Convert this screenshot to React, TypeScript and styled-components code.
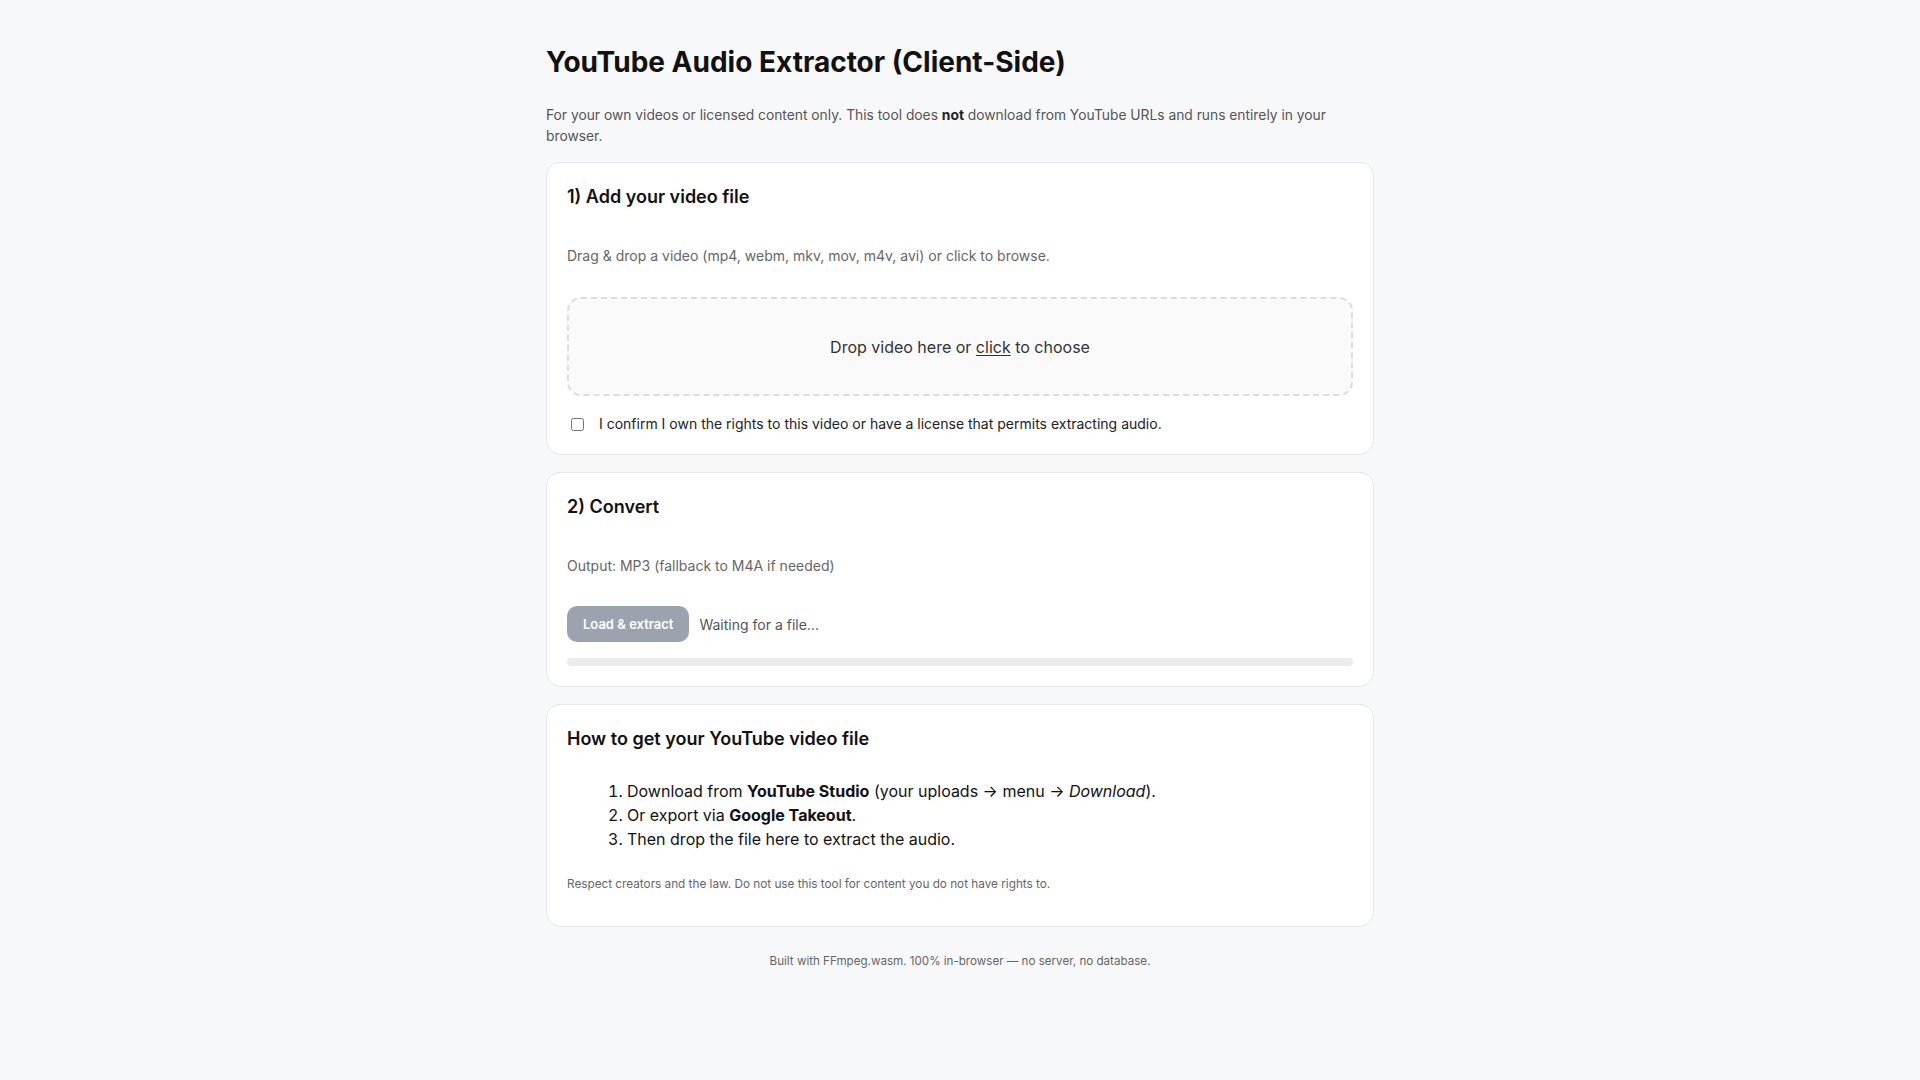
import React, { useState } from 'react'
import styled, { createGlobalStyle } from 'styled-components'

const GlobalStyle = createGlobalStyle`
  html, body {
    margin: 0;
    padding: 0;
    background: #f7f8fa;
    font-family: Inter, "Noto Sans", "Liberation Sans", sans-serif;
    color: #111;
  }
`

const Page = styled.main`
  max-width: 828px;
  margin: 0 auto;
  padding: 45px 0 40px;
`

const Title = styled.h1`
  margin: 0;
  font-size: 28px;
  line-height: 34px;
  font-weight: 700;
  color: #111;
`

const Lead = styled.p`
  margin: 26px 0 15px;
  font-size: 13.8px;
  line-height: 21px;
  color: #555;

  b {
    color: #222;
    font-weight: 700;
  }
`

const Card = styled.section`
  background: #fff;
  border: 1px solid #e5e7eb;
  border-radius: 14px;
  padding: 20px;
  margin-bottom: 17px;
`

const CardTitle = styled.h2`
  margin: 0;
  font-size: 18px;
  line-height: 28px;
  font-weight: 600;
  color: #111;
`

const Hint = styled.p`
  margin: 35px 0 0;
  font-size: 14px;
  line-height: 20px;
  color: #666;
`

const DropZone = styled.div`
  margin-top: 31px;
  border: 2px dashed #ddd;
  border-radius: 14px;
  background: #fafafa;
  padding: 36px 16px 35px;
  text-align: center;
  font-size: 16px;
  line-height: 24px;
  color: #333;
  cursor: pointer;

  u {
    text-decoration: underline;
    text-underline-offset: 2px;
  }
`

const ConfirmRow = styled.label`
  display: flex;
  align-items: center;
  gap: 15px;
  margin-top: 18px;
  padding-left: 4px;
  font-size: 14px;
  line-height: 20px;
  color: #222;

  input {
    margin: 0;
    width: 13px;
    height: 13px;
  }
`

const ActionRow = styled.div`
  display: flex;
  align-items: center;
  gap: 10px;
  margin-top: 30px;
`

const Button = styled.button<{ $disabled?: boolean }>`
  height: 36px;
  padding: 0 16px;
  border: none;
  border-radius: 10px;
  background: ${(p) => (p.$disabled ? '#9ca3af' : '#111827')};
  color: #fff;
  font-family: inherit;
  font-size: 13px;
  font-weight: 600;
  cursor: ${(p) => (p.$disabled ? 'not-allowed' : 'pointer')};
`

const Status = styled.span`
  font-size: 14px;
  color: #555;
`

const Progress = styled.div`
  margin-top: 16px;
  height: 8px;
  border-radius: 999px;
  background: #ececec;
  overflow: hidden;
`

const ProgressFill = styled.div`
  height: 100%;
  background: #111827;
`

const Steps = styled.ol`
  margin: 26px 0 0;
  padding-left: 60px;
  font-size: 16px;
  line-height: 24px;
  color: #111;

  b {
    font-weight: 700;
  }
`

const Note = styled.p`
  margin: 24px 0 13px;
  font-size: 11.75px;
  line-height: 18px;
  color: #666;
`

const Footer = styled.footer`
  margin-top: 25px;
  text-align: center;
  font-size: 11.6px;
  line-height: 18px;
  color: #666;
`

export default function App() {
  const [confirmed, setConfirmed] = useState(false)
  const [progress] = useState(0)

  return (
    <>
      <GlobalStyle />
      <Page>
        <Title>YouTube Audio Extractor (Client-Side)</Title>
        <Lead>
          For your own videos or licensed content only. This tool does <b>not</b> download from
          YouTube URLs and runs entirely in your browser.
        </Lead>

        <Card>
          <CardTitle>1) Add your video file</CardTitle>
          <Hint>Drag &amp; drop a video (mp4, webm, mkv, mov, m4v, avi) or click to browse.</Hint>
          <DropZone>
            Drop video here or <u>click</u> to choose
          </DropZone>
          <ConfirmRow>
            <input
              type="checkbox"
              checked={confirmed}
              onChange={(e) => setConfirmed(e.target.checked)}
            />
            I confirm I own the rights to this video or have a license that permits extracting audio.
          </ConfirmRow>
        </Card>

        <Card>
          <CardTitle>2) Convert</CardTitle>
          <Hint>Output: MP3 (fallback to M4A if needed)</Hint>
          <ActionRow>
            <Button $disabled>Load &amp; extract</Button>
            <Status>Waiting for a file...</Status>
          </ActionRow>
          <Progress>
            <ProgressFill style={{ width: `${progress}%` }} />
          </Progress>
        </Card>

        <Card>
          <CardTitle>How to get your YouTube video file</CardTitle>
          <Steps>
            <li>
              Download from <b>YouTube Studio</b> (your uploads → menu → <i>Download</i>).
            </li>
            <li>
              Or export via <b>Google Takeout</b>.
            </li>
            <li>Then drop the file here to extract the audio.</li>
          </Steps>
          <Note>Respect creators and the law. Do not use this tool for content you do not have rights to.</Note>
        </Card>

        <Footer>Built with FFmpeg.wasm. 100% in-browser — no server, no database.</Footer>
      </Page>
    </>
  )
}
